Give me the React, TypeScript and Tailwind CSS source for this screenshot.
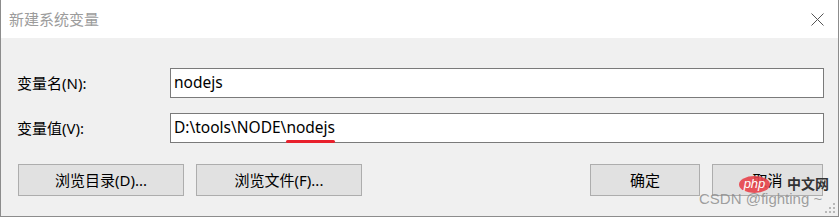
export default function App() {
  const font = { fontFamily: '"Noto Sans", "Noto Sans CJK SC", sans-serif' };
  return (
    <div
      className="relative w-[839px] h-[217px] overflow-hidden flex flex-col bg-[#f0f0f0] border-x border-b border-[#8c8c8c] text-black"
      style={font}
    >
      {/* title bar */}
      <div className="h-[38px] shrink-0 bg-white flex items-center justify-between pl-[8px] pr-[14px]">
        <span className="text-[15px] text-[#9c9c9c] leading-none">新建系统变量</span>
        <svg width="13" height="13" viewBox="0 0 13 13" className="text-[#555]">
          <path d="M0.5 0.5 L12.5 12.5 M12.5 0.5 L0.5 12.5" stroke="currentColor" strokeWidth="1" fill="none" />
        </svg>
      </div>

      {/* body */}
      <div className="flex-1 flex flex-col pl-[16px] pr-[14px] pt-[30px]">
        <div className="flex items-center h-[30px]">
          <span className="w-[153px] text-[15px]">变量名(N):</span>
          <div className="flex-1 h-[30px] border border-[#7a7a7a] bg-white flex items-center px-[3px] text-[15.5px]">
            nodejs
          </div>
        </div>
        <div className="flex items-center h-[30px] mt-[15px]">
          <span className="w-[153px] text-[15px]">变量值(V):</span>
          <div className="flex-1 h-[30px] border border-[#7a7a7a] bg-white flex items-center px-[3px] text-[15.5px]">
            D:\tools\NODE\
            <span className="relative">
              nodejs
              <span className="absolute left-0 right-0 -bottom-[3px] h-[3px] rounded-full bg-[#e8202c]" />
            </span>
          </div>
        </div>
        <div className="flex items-center mt-[21px] pl-[1px] pr-[1px] text-[15px]">
          <button className="w-[166px] h-[32px] bg-[#e1e1e1] border border-[#adadad]">浏览目录(D)...</button>
          <button className="w-[166px] h-[32px] bg-[#e1e1e1] border border-[#adadad] ml-[12px]">浏览文件(F)...</button>
          <button className="w-[110px] h-[32px] bg-[#e1e1e1] border border-[#adadad] ml-auto">确定</button>
          <button className="w-[111px] h-[32px] bg-[#e1e1e1] border border-[#adadad] ml-[12px]">取消</button>
        </div>
      </div>

      {/* watermark */}
      <div className="absolute left-[738px] top-[176px] w-[31px] h-[17px] rounded-[50%] bg-[#e8434b]/90 flex items-center justify-center">
        <span className="text-white italic text-[13px] leading-none -mt-[2px]" style={{ fontFamily: '"Liberation Sans", sans-serif' }}>
          php
        </span>
      </div>
      <span className="absolute left-[786px] top-[174px] text-[14px] font-bold text-[#333] leading-[20px]">中文网</span>
      <span
        className="absolute left-[698px] top-[190px] text-[15px] text-[#888]/80 leading-[17px]"
        style={{ fontFamily: '"Liberation Sans", sans-serif' }}
      >
        CSDN @fighting ~
      </span>

      {/* resize grip */}
      <svg className="absolute right-[1px] bottom-[1px]" width="12" height="12" viewBox="0 0 12 12">
        <rect x="8" y="0" width="2" height="2" fill="#b8b8b8" />
        <rect x="4" y="4" width="2" height="2" fill="#b8b8b8" />
        <rect x="8" y="4" width="2" height="2" fill="#b8b8b8" />
        <rect x="0" y="8" width="2" height="2" fill="#b8b8b8" />
        <rect x="4" y="8" width="2" height="2" fill="#b8b8b8" />
        <rect x="8" y="8" width="2" height="2" fill="#b8b8b8" />
      </svg>
    </div>
  );
}
